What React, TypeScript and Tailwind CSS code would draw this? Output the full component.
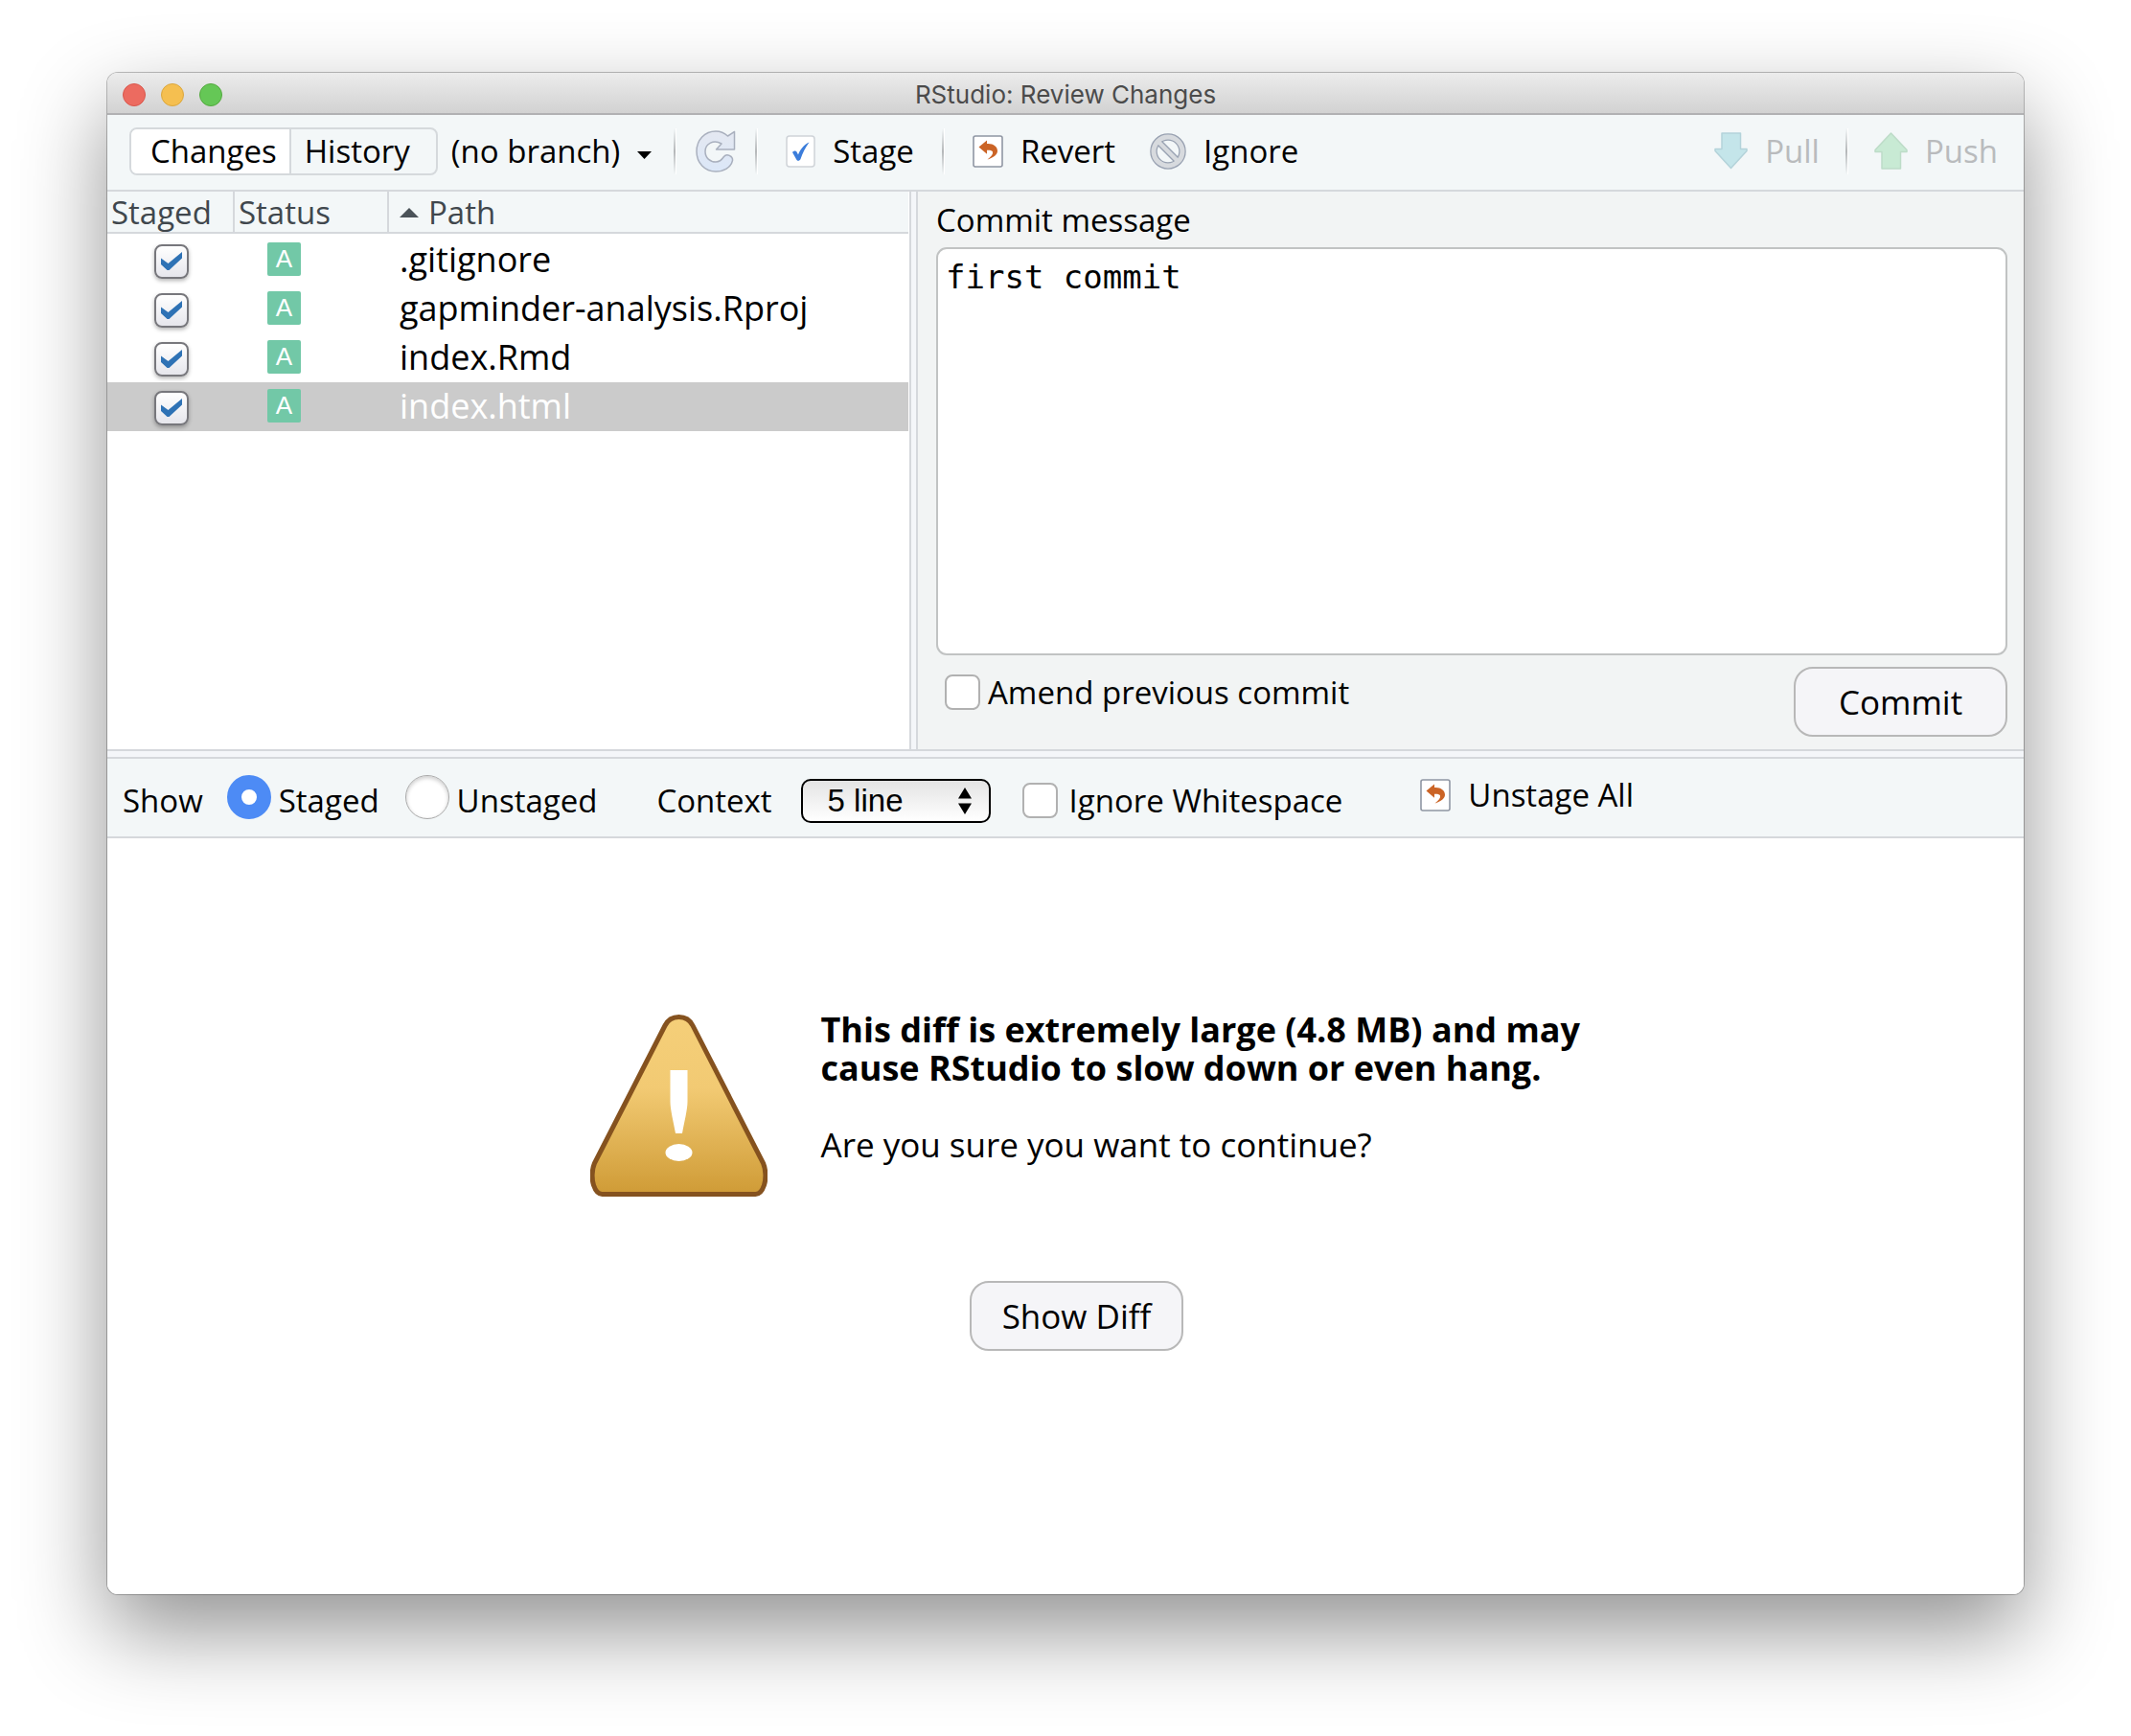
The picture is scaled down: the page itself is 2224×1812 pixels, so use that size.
import { useState, type ReactNode } from "react";

type FileEntry = { path: string; status: string };

const FILES: FileEntry[] = [
  { path: ".gitignore", status: "A" },
  { path: "gapminder-analysis.Rproj", status: "A" },
  { path: "index.Rmd", status: "A" },
  { path: "index.html", status: "A" },
];

function RefreshIcon() {
  return (
    <svg width="42" height="44" viewBox="0 0 42 44" aria-hidden="true">
      <defs>
        <linearGradient id="refresh" x1="0" y1="0" x2="0" y2="1">
          <stop offset="0" stopColor="#e4e8f1" />
          <stop offset="1" stopColor="#dbe7f8" />
        </linearGradient>
      </defs>
      <path
        d="M40.5 1.5V20H21.5l5.500-6C19 9.500 10 13.500 10 22c0 7 5 11 11 11 4 0 6.500-2.500 8.500-5.500 3-4 9.500-.5 9 4C37 39 29 43 21 43 9.500 43 1 34 1 22 1 10 9.500 1 21 1c5 0 9 1.700 12.500 5z"
        fill="url(#refresh)"
        stroke="#a9b0be"
        strokeWidth="1.500"
        strokeLinejoin="round"
      />
    </svg>
  );
}

function StageIcon() {
  return (
    <svg width="31" height="34" viewBox="0 0 31 34" aria-hidden="true">
      <rect x="1" y="1" width="29" height="32" rx="3" fill="#fff" stroke="#cfd3d8" strokeWidth="1.5" />
      <path d="M7 18c1.500-2 3.500-2 4.500-.5l1.500 3C15 15 19 10 24.500 7.500 20.500 13 17.500 19 15.500 25c-.8 2-3.500 2.500-4.300.4z" fill="#3b7ddb" />
    </svg>
  );
}

function RevertIcon() {
  return (
    <svg width="32" height="34" viewBox="0 0 32 34" aria-hidden="true">
      <rect x="1" y="1" width="30" height="32" rx="2" fill="#fff" stroke="#8f96a3" strokeWidth="1.600" />
      <path d="M6.500 12.500 15 5.500v3.500c6.500-.5 11 3 11 7.500 0 4-4 7-10.500 9 4-3 6-5.500 5.500-8-.4-1.600-3-2-6-1.800v4z" fill="#cb6426" />
    </svg>
  );
}

function IgnoreIcon() {
  return (
    <svg width="38" height="38" viewBox="0 0 38 38" fill="none" aria-hidden="true">
      <g stroke="#98a1b1">
        <circle cx="19" cy="19" r="15" strokeWidth="7.500" />
        <path d="m9 9 20 20" strokeWidth="7" />
      </g>
      <g stroke="#d7dade">
        <circle cx="19" cy="19" r="15" strokeWidth="5" />
        <path d="m8.500 8.500 21 21" strokeWidth="4.500" />
      </g>
    </svg>
  );
}

function PullIcon() {
  return (
    <svg width="35" height="39" viewBox="0 0 35 39" aria-hidden="true">
      <path d="M8 1h19.500v16.500H34v2L17.500 37.500 1 19.500v-2h7z" fill="#c4e5ea" stroke="#b4d3da" strokeWidth="1.500" strokeLinejoin="round" />
    </svg>
  );
}

function PushIcon() {
  return (
    <svg width="35" height="39" viewBox="0 0 35 39" aria-hidden="true">
      <path d="M8 38h19.500V20.500H34v-2L17.500 1 1 18.500v2h7z" fill="#c8ead4" stroke="#bddcc8" strokeWidth="1.500" strokeLinejoin="round" />
    </svg>
  );
}

function WarningIcon() {
  return (
    <svg width="185" height="190" viewBox="0 0 185 190" className="mt-1 shrink-0" aria-hidden="true">
      <defs>
        <linearGradient id="warning" x1="0" y1="0" x2="0" y2="1">
          <stop offset="0" stopColor="#f5cf79" />
          <stop offset="0.400" stopColor="#f2ca73" />
          <stop offset="1" stopColor="#cf9b36" />
        </linearGradient>
      </defs>
      <path
        d="M92.500 2.500c7 0 11.500 3 14.500 9L180.500 155c3 7 3 17 1 23-2 6-5 9.500-9 9.500h-160c-4 0-7-3.500-9-9.500-2-6-2-16 1-23L78 11.500c3-6 7.500-9 14.500-9z"
        fill="url(#warning)"
        stroke="#85521f"
        strokeWidth="5"
      />
      <path d="M83.500 58h18v33c0 8-3.500 22-5.500 33h-7c-2-11-5.500-25-5.500-33z" fill="#fff" />
      <ellipse cx="92.500" cy="144" rx="14" ry="9" fill="#fff" />
    </svg>
  );
}

function Separator() {
  return <div className="h-12 w-[3px] border-r border-white bg-linear-to-b from-transparent via-[#b4b7b9] to-transparent" />;
}

function ToolbarButton({ icon, label, disabled }: { icon: ReactNode; label: string; disabled?: boolean }) {
  return (
    <button type="button" disabled={disabled} className="flex items-center gap-[18px] disabled:text-[#b9bbbd]">
      {icon}
      {label}
    </button>
  );
}

function TitleBar() {
  return (
    <header className="grid h-11 grid-cols-[1fr_auto_1fr] items-center rounded-t-[11px] border-b-2 border-[#b1b1b3] bg-linear-to-b from-[#ececec] to-[#d2d2d2] px-4 pt-[3px]">
      <div className="flex gap-4">
        <button type="button" aria-label="Close" className="size-6 rounded-full border border-[#d9574c] bg-[#ec6b60]" />
        <button type="button" aria-label="Minimize" className="size-6 rounded-full border border-[#dba73e] bg-[#f5bf50]" />
        <button type="button" aria-label="Zoom" className="size-6 rounded-full border border-[#54a93f] bg-[#65c756]" />
      </div>
      <h1 className="font-['Inter',sans-serif] text-[26px] leading-8 text-[#4b4b4b]">RStudio: Review Changes</h1>
    </header>
  );
}

function MainToolbar() {
  const [view, setView] = useState("changes");

  return (
    <div className="flex h-20 items-center border-b-2 border-[#d5d8dc] bg-[#f3f7f8] pr-[27px] pb-[3px] pl-[23px]">
      <div className="flex h-[50px] overflow-hidden rounded-lg border-2 border-[#d5d9dc]">
        <button
          type="button"
          onClick={() => setView("changes")}
          className={`border-r-2 border-[#d5d9dc] pr-[13px] pl-5 ${view === "changes" ? "bg-white" : ""}`}
        >
          Changes
        </button>
        <button
          type="button"
          onClick={() => setView("history")}
          className={`pr-[27px] pl-[14px] ${view === "history" ? "bg-white" : ""}`}
        >
          History
        </button>
      </div>
      <button type="button" className="ml-[14px] flex items-center gap-[18px]">
        (no branch)
        <svg width="15" height="8" viewBox="0 0 15 8" className="mt-2" aria-hidden="true">
          <path d="M0 0h15L7.500 8z" />
        </svg>
      </button>
      <div className="ml-[23px] flex items-center gap-5">
        <Separator />
        <button type="button" aria-label="Refresh">
          <RefreshIcon />
        </button>
        <Separator />
      </div>
      <div className="ml-[29px] flex items-center gap-[29px]">
        <ToolbarButton icon={<StageIcon />} label="Stage" />
        <Separator />
        <ToolbarButton icon={<RevertIcon />} label="Revert" />
      </div>
      <div className="ml-9 flex items-center">
        <ToolbarButton icon={<IgnoreIcon />} label="Ignore" />
      </div>
      <div className="ml-auto flex items-center gap-[27px]">
        <ToolbarButton icon={<PullIcon />} label="Pull" disabled />
        <Separator />
        <ToolbarButton icon={<PushIcon />} label="Push" disabled />
      </div>
    </div>
  );
}

function StagedCheckbox({ path, checked, onChange }: { path: string; checked: boolean; onChange: () => void }) {
  return (
    <label className="mx-auto grid w-9 place-items-center">
      <input
        type="checkbox"
        checked={checked}
        onChange={onChange}
        aria-label={`Stage ${path}`}
        className="size-9 appearance-none rounded-lg border-2 border-[#77777c] bg-linear-to-b from-white to-[#e6e6ec] shadow-[0_2px_4px_rgba(0,0,0,0.3)] [grid-area:1/1]"
      />
      {checked && (
        <svg width="22" height="20" viewBox="0 0 22 20" className="pointer-events-none [grid-area:1/1]" aria-hidden="true">
          <path d="M0 6.500 7.500 12 22 0v6.500L8.500 19h-2L0 13z" fill="#2e72b5" />
        </svg>
      )}
    </label>
  );
}

function FileTable() {
  const [staged, setStaged] = useState<Record<string, boolean>>(
    Object.fromEntries(FILES.map((f) => [f.path, true]))
  );
  const [selected, setSelected] = useState("index.html");

  return (
    <div className="border-r border-white bg-white">
      <table className="w-full table-fixed border-separate border-spacing-0 text-left">
        <thead>
          <tr className="h-11 bg-[#f3f7f8] leading-10 text-[#40474d]">
            <th className="w-[133px] border-r-2 border-b-2 border-[#d5d8dc] p-0 pt-[2px] pl-1 font-normal">Staged</th>
            <th className="w-[161px] border-r-2 border-b-2 border-[#d5d8dc] p-0 pt-[2px] pl-1 font-normal">Status</th>
            <th className="border-b-2 border-[#d5d8dc] p-0 pt-[2px] pl-[11px] font-normal">
              <span className="flex items-center gap-[10px]">
                <svg width="20" height="10" viewBox="0 0 20 10" aria-hidden="true">
                  <path d="M0 10h20L10 0z" fill="#4b5359" />
                </svg>
                Path
              </span>
            </th>
          </tr>
        </thead>
        <tbody className="before:block before:h-[2px]">
          {FILES.map((file) => {
            const active = file.path === selected;
            return (
              <tr
                key={file.path}
                onClick={() => setSelected(file.path)}
                className={`h-[51px] ${active ? "bg-[#cbcbcb] text-white" : "text-black"}`}
              >
                <td className="p-0 pt-[2px]">
                  <StagedCheckbox
                    path={file.path}
                    checked={staged[file.path]}
                    onChange={() => setStaged({ ...staged, [file.path]: !staged[file.path] })}
                  />
                </td>
                <td className="p-0 pb-[3px] pl-[34px]">
                  <span className="flex size-[35px] items-center justify-center rounded-[2px] bg-[#72c8a7] font-['Liberation_Sans',sans-serif] text-[26px] leading-none text-white">
                    {file.status}
                  </span>
                </td>
                <td className="p-0 pb-[3px] pl-[11px] text-[36px] leading-[45px]">{file.path}</td>
              </tr>
            );
          })}
        </tbody>
      </table>
    </div>
  );
}

function CommitPanel() {
  const [message, setMessage] = useState("first commit");

  return (
    <div className="flex flex-col bg-[#f2f4f4] pt-[10px] pr-[17px] pl-[19px]">
      <label htmlFor="message" className="leading-10">
        Commit message
      </label>
      <textarea
        id="message"
        value={message}
        onChange={(e) => setMessage(e.target.value)}
        className="mt-2 h-[426px] resize-none rounded-[11px] border-2 border-[#c1c3c3] bg-white px-2 py-[9px] font-['DejaVu_Sans_Mono',monospace] text-[34px] leading-10 outline-none"
      />
      <div className="mt-3 flex items-start justify-between">
        <label className="flex items-center gap-2 pt-2 pl-[9px] leading-9">
          <input type="checkbox" className="size-[37px] appearance-none rounded-lg border-2 border-[#b1b1b1] bg-white checked:bg-[#4d8bf5]" />
          Amend previous commit
        </label>
        <button type="button" className="h-[73px] w-[223px] rounded-[20px] border-2 border-[#b8b8b8] bg-[#f5f5f8] text-[35px]">
          Commit
        </button>
      </div>
    </div>
  );
}

function DiffToolbar() {
  const [show, setShow] = useState("staged");
  const radio =
    "mb-2 size-[46px] appearance-none rounded-full border border-[#a9a9a9] bg-white shadow-[inset_0_2px_4px_rgba(0,0,0,0.2)] checked:border-[15px] checked:border-[#4d8bf5] checked:shadow-none";

  return (
    <div className="flex h-[83px] items-center border-b-2 border-[#d5d8dc] bg-[#f3f7f8] pt-[6px] pl-4">
      <span>Show</span>
      <label className="ml-[25px] flex items-center gap-2">
        <input type="radio" name="show" checked={show === "staged"} onChange={() => setShow("staged")} className={radio} />
        Staged
      </label>
      <label className="ml-[27px] flex items-center gap-2">
        <input type="radio" name="show" checked={show === "unstaged"} onChange={() => setShow("unstaged")} className={radio} />
        Unstaged
      </label>
      <label htmlFor="context" className="ml-[62px]">
        Context
      </label>
      <div className="relative ml-[30px] w-[198px]">
        <select
          id="context"
          className="h-[46px] w-full appearance-none rounded-[10px] border-2 border-black bg-linear-to-b from-[#e4e4e4] to-white pl-[26px] font-['Liberation_Sans',sans-serif] text-[33px] leading-9"
        >
          <option>5 line</option>
          <option>10 line</option>
          <option>25 line</option>
          <option>50 line</option>
        </select>
        <svg width="14" height="28" viewBox="0 0 14 28" className="pointer-events-none absolute top-[9px] right-5" aria-hidden="true">
          <path d="M0 11.500h14L7 0zM0 16.500h14L7 28z" />
        </svg>
      </div>
      <label className="ml-[33px] flex items-center gap-3">
        <input type="checkbox" className="size-[37px] appearance-none rounded-lg border-2 border-[#b1b1b1] bg-white checked:bg-[#4d8bf5]" />
        Ignore Whitespace
      </label>
      <div className="ml-[81px] pb-3">
        <ToolbarButton icon={<RevertIcon />} label="Unstage All" />
      </div>
    </div>
  );
}

export default function App() {
  return (
    <main className="flex min-h-screen flex-col bg-white px-28 pt-[76px] pb-[148px] font-['Open_Sans','Noto_Sans',sans-serif] text-[33px] leading-[42px] text-black">
      <div className="flex flex-1 flex-col rounded-[11px] shadow-[0_0_0_1px_rgba(0,0,0,0.25),0_38px_90px_rgba(0,0,0,0.43)]">
        <TitleBar />
        <MainToolbar />
        <div className="grid min-h-[584px] grid-cols-[837fr_9px_1154fr] border-b-2 border-[#d5d8dc]">
          <FileTable />
          <div className="border-x-2 border-[#d5d8dc] bg-[#f4f6f9]" />
          <CommitPanel />
        </div>
        <div className="h-2 border-b-2 border-[#d5d8dc] bg-[#f4f6f9]" />
        <DiffToolbar />
        <section className="flex flex-1 justify-center rounded-b-[11px] bg-white pt-[180px] pl-[23px]">
          <div className="flex w-[1016px] flex-col items-center">
            <div className="flex w-full gap-14">
              <WarningIcon />
              <div className="text-[35px] leading-10 whitespace-nowrap">
                <p className="text-[36px] leading-10 font-bold">
                  This diff is extremely large (4.8 MB) and may
                  <br />
                  cause RStudio to slow down or even hang.
                </p>
                <p className="mt-10">Are you sure you want to continue?</p>
              </div>
            </div>
            <button type="button" className="mt-[88px] h-[73px] w-[223px] rounded-[20px] border-2 border-[#b8b8b8] bg-[#f5f5f8] text-[35px]">
              Show Diff
            </button>
          </div>
        </section>
      </div>
    </main>
  );
}
